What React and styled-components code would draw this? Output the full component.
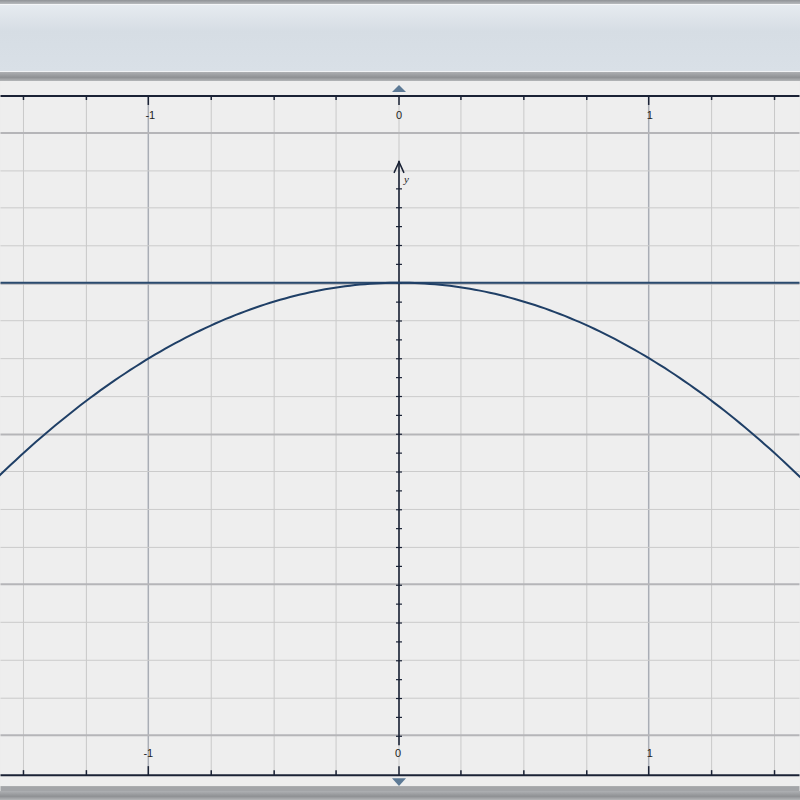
import React from "react";
import styled, { createGlobalStyle } from "styled-components";

const Global = createGlobalStyle`
  html, body { margin: 0; padding: 0; background: #c9cbcd; font-family: "Liberation Serif", serif; }
`;
const Frame = styled.div`
  width: 800px; height: 800px; display: flex; flex-direction: column; overflow: hidden;
  background: #bfc2c5;
`;
const TopEdge = styled.div`height: 4px; background: linear-gradient(#8f9296, #b8bbbe);`;
const Toolbar = styled.div`
  height: 66px; background: linear-gradient(#e6ebf0, #d6dde4 40%, #d9e0e7);
  border-top: 1px solid #f4f6f8; border-bottom: 1px solid #f1f3f5;
`;
const Band = styled.div`
  height: ${p => p.h}px; background: linear-gradient(#aeb0b3, #8f9194 60%, #b4b6b8);
`;
const Canvas = styled.svg`display: block; background: #ededed;`;

const vx = [23, 86, 148, 211, 274, 336, 399, 461, 524, 587, 649, 712, 775];
const hy = [];
for (let y = 132; y <= 760; y += 37.7) hy.push(Math.round(y));
const major = [132, 283, 434, 585, 735];

function parabola() {
  let d = "";
  for (let x = -10; x <= 810; x += 5) {
    const dx = (x - 399) / 400;
    const y = 282 + 193 * dx * dx;
    d += (d ? " L" : "M") + x + " " + y.toFixed(1);
  }
  return d;
}

export default function App() {
  return (
    <Frame>
      <Global />
      <TopEdge />
      <Toolbar />
      <Band h={9} />
      <Canvas width="800" height="711" viewBox="0 80 800 711">
        <rect x="0" y="80" width="800" height="711" fill="#eeeeee" />
        {vx.map(x => (
          <line key={"v" + x} x1={x} y1={95} x2={x} y2={775}
            stroke={[148, 649].includes(x) ? "#a9adb5" : "#c9c9c9"} strokeWidth={[148, 649].includes(x) ? 1.5 : 1} />
        ))}
        {hy.map(y => (
          <line key={"h" + y} x1={0} y1={y} x2={800} y2={y}
            stroke={major.some(m => Math.abs(m - y) < 3) ? "#b5b5b8" : "#cbcbcb"}
            strokeWidth={major.some(m => Math.abs(m - y) < 3) ? 2 : 1} />
        ))}
        {/* top ruler */}
        <line x1="0" y1="95" x2="800" y2="95" stroke="#1a2235" strokeWidth="2" />
        {vx.map(x => <line key={"tt" + x} x1={x} y1={95} x2={x} y2={[148, 399, 649].includes(x) ? 104 : 99} stroke="#1a2235" strokeWidth="1.5" />)}
        <text x="150" y="118" fontSize="11" textAnchor="middle" fill="#222" fontFamily="Liberation Sans, sans-serif">-1</text>
        <text x="399" y="118" fontSize="11" textAnchor="middle" fill="#222" fontFamily="Liberation Sans, sans-serif">0</text>
        <text x="650" y="118" fontSize="11" textAnchor="middle" fill="#222" fontFamily="Liberation Sans, sans-serif">1</text>
        <polygon points="392,91 406,91 399,84" fill="#5d7a96" />
        {/* bottom ruler */}
        <line x1="0" y1="775" x2="800" y2="775" stroke="#1a2235" strokeWidth="2" />
        {vx.map(x => <line key={"bt" + x} x1={x} y1={775} x2={x} y2={[148, 399, 649].includes(x) ? 766 : 770} stroke="#1a2235" strokeWidth="1.5" />)}
        <text x="148" y="757" fontSize="11" textAnchor="middle" fill="#222" fontFamily="Liberation Sans, sans-serif">-1</text>
        <text x="398" y="757" fontSize="11" textAnchor="middle" fill="#222" fontFamily="Liberation Sans, sans-serif">0</text>
        <text x="650" y="757" fontSize="11" textAnchor="middle" fill="#222" fontFamily="Liberation Sans, sans-serif">1</text>
        <polygon points="392,778 406,778 399,786" fill="#5d7a96" />
        <rect x="0" y="786" width="800" height="5" fill="#a3a5a8" />
        {/* y axis */}
        <line x1="399" y1="160" x2="399" y2="745" stroke="#1a2235" strokeWidth="1.6" />
        <polyline points="394,172 399,161 404,172" fill="none" stroke="#1a2235" strokeWidth="1.5" />
        <text x="404" y="182" fontSize="11" fontStyle="italic" fill="#222">y</text>
        {Array.from({ length: 30 }, (_, i) => 188 + i * 18.9).map(y => (
          <line key={"yt" + y} x1={396} y1={y} x2={402} y2={y} stroke="#1a2235" strokeWidth="1.2" />
        ))}
        {/* horizontal line y=0 */}
        <line x1="0" y1="282" x2="800" y2="282" stroke="#2a4a6e" strokeWidth="2" />
        <path d={parabola()} fill="none" stroke="#1f3f66" strokeWidth="2" />
      </Canvas>
      <Band h={9} />
    </Frame>
  );
}
